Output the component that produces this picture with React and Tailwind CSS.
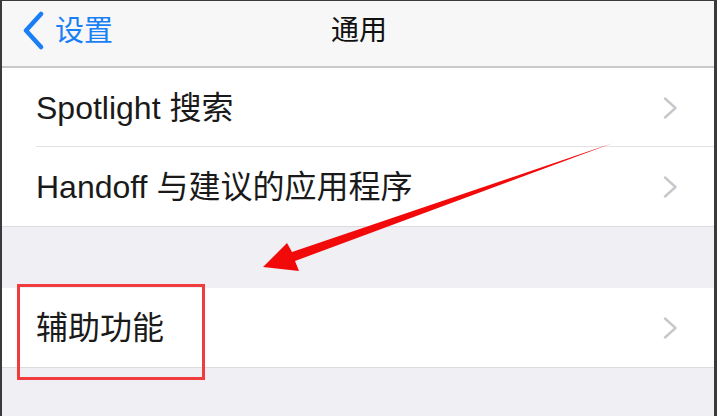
import React from "react";

const font = { fontFamily: '"Liberation Sans", "Noto Sans CJK SC", sans-serif' };

function Chevron() {
  return (
    <svg width="16" height="22" viewBox="0 0 16 22" className="shrink-0">
      <path d="M2 1.5 L12.5 11 L2 20.5" fill="none" stroke="#c7c7cc" strokeWidth="2.4" strokeLinecap="round" strokeLinejoin="round" />
    </svg>
  );
}

function Row({ label, separator }) {
  return (
    <div className="relative flex h-[79px] items-center bg-white pl-[34px] pr-[35px]">
      <span className="flex-1 text-[32px] leading-none text-[#1a1a1a]">{label}</span>
      <Chevron />
      {separator && <div className="absolute bottom-0 left-[34px] right-0 h-px bg-[#e2e2e4]" />}
    </div>
  );
}

export default function App() {
  return (
    <div className="relative h-[416px] w-[717px] overflow-hidden border-t border-l-2 border-r-[3px] border-[#3a3a3a] bg-[#efeff4]" style={font}>
      <div className="flex h-[67px] items-start border-b-2 border-[#c9c9cb] bg-[#f7f7f7] pt-[10px]">
        <div className="flex w-[290px] items-center pl-[19px]">
          <svg width="27" height="40" viewBox="0 0 27 40" className="shrink-0">
            <path d="M20 3 L5 19.5 L20 36" fill="none" stroke="#1a7ff6" strokeWidth="4.5" strokeLinecap="round" strokeLinejoin="round" />
          </svg>
          <span className="ml-[7px] text-[29px] leading-none text-[#1a7ff6]">设置</span>
        </div>
        <div className="flex w-[134px] justify-center pt-[6px] text-[28px] leading-none text-[#111]">通用</div>
      </div>
      <Row label="Spotlight 搜索" separator />
      <Row label="Handoff 与建议的应用程序" />
      <div className="h-[62px] border-t border-[#dcdce0]" />
      <div className="border-b border-[#dcdce0]">
        <Row label="辅助功能" />
      </div>

      <div className="pointer-events-none absolute left-[15px] top-[283px] h-[96px] w-[188px] border-[3px] border-[#f03c3c]" />

      <svg className="pointer-events-none absolute left-0 top-0" width="717" height="416" viewBox="0 0 717 416">
        <polygon
          points="611,142 290,251 285,242 261,266 297,270 293,260"
          fill="#f20a0a"
        />
      </svg>
    </div>
  );
}
